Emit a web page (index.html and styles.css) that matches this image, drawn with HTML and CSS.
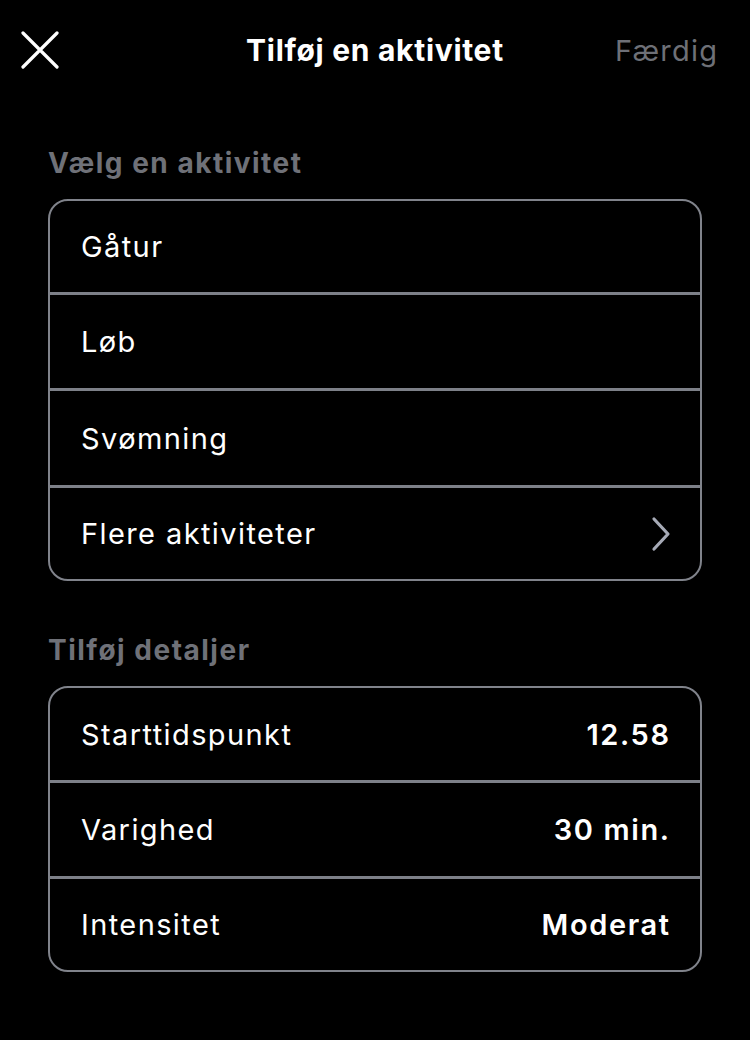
FILE: index.html
```html
<!DOCTYPE html>
<html lang="da">
<head>
<meta charset="utf-8">
<link rel="stylesheet" href="styles.css">
</head>
<body>
<div class="screen">
  <header class="topbar">
    <button class="close" aria-label="Luk">
      <svg width="38" height="38" viewBox="0 0 38 38"><path d="M2 2 L36 36 M36 2 L2 36" stroke="#fff" stroke-width="3.2" stroke-linecap="round" fill="none"/></svg>
    </button>
    <h1 class="title">Tilføj en aktivitet</h1>
    <span class="done">Færdig</span>
  </header>

  <main class="content">
    <h2 class="section-title">Vælg en aktivitet</h2>
    <div class="card activities">
      <div class="row"><span class="label">Gåtur</span></div>
      <div class="row"><span class="label">Løb</span></div>
      <div class="row"><span class="label">Svømning</span></div>
      <div class="row"><span class="label">Flere aktiviteter</span>
        <svg class="chevron" width="20" height="36" viewBox="0 0 20 36"><path d="M3 3 L17 18 L3 33" stroke="#a6aab6" stroke-width="3.2" stroke-linecap="round" stroke-linejoin="round" fill="none"/></svg>
      </div>
    </div>

    <h2 class="section-title second">Tilføj detaljer</h2>
    <div class="card details">
      <div class="row"><span class="label">Starttidspunkt</span><span class="value">12.58</span></div>
      <div class="row"><span class="label">Varighed</span><span class="value">30 min.</span></div>
      <div class="row"><span class="label">Intensitet</span><span class="value">Moderat</span></div>
    </div>
  </main>
</div>
</body>
</html>
```

FILE: styles.css
```css
* { box-sizing: border-box; }
html, body {
  margin: 0;
  padding: 0;
  background: #000;
}
body {
  font-family: Inter, "Noto Sans", sans-serif;
  color: #fff;
  width: 750px;
  height: 1040px;
  overflow: hidden;
}
.topbar {
  height: 100px;
  display: flex;
  align-items: center;
  justify-content: space-between;
  padding: 0 33px 0 21px;
  position: relative;
}
.close {
  background: none;
  border: 0;
  padding: 0;
  width: 38px;
  height: 38px;
  display: flex;
}
.title {
  position: absolute;
  left: 0;
  right: 0;
  text-align: center;
  margin: 0;
  font-size: 30px;
  font-weight: 700;
  letter-spacing: 0.7px;
  pointer-events: none;
}
.done {
  font-size: 29px;
  color: #6e7077;
  font-weight: 400;
  letter-spacing: 1.2px;
  margin-right: -1.2px;
}
.content {
  padding: 0 48px;
}
.section-title {
  margin: 45px 0 18px;
  height: 36px;
  line-height: 36px;
  font-size: 28px;
  font-weight: 700;
  color: #6f7178;
  letter-spacing: 1.5px;
}
.section-title.second {
  margin-top: 51px;
}
.card {
  border: 2px solid #80838b;
  border-radius: 20px;
  display: flex;
  flex-direction: column;
  overflow: hidden;
}
.row {
  height: 92px;
  display: flex;
  align-items: center;
  justify-content: space-between;
  padding: 0 31px;
  font-size: 29px;
  letter-spacing: 1.4px;
}
.row + .row {
  border-top: 3px solid #7d8088;
}
.activities .row:nth-child(1) { height: 91px; }
.activities .row:nth-child(2) { height: 96px; }
.activities .row:nth-child(3) { height: 97px; }
.activities .row:nth-child(4) { height: 94px; }
.details .row:nth-child(1) { height: 92px; }
.details .row:nth-child(2) { height: 96px; }
.details .row:nth-child(3) { height: 94px; }
.label {
  font-weight: 400;
}
.value {
  font-weight: 600;
  letter-spacing: 1.6px;
  margin-right: -1.6px;
}
.chevron {
  margin-right: -2px;
}
```
